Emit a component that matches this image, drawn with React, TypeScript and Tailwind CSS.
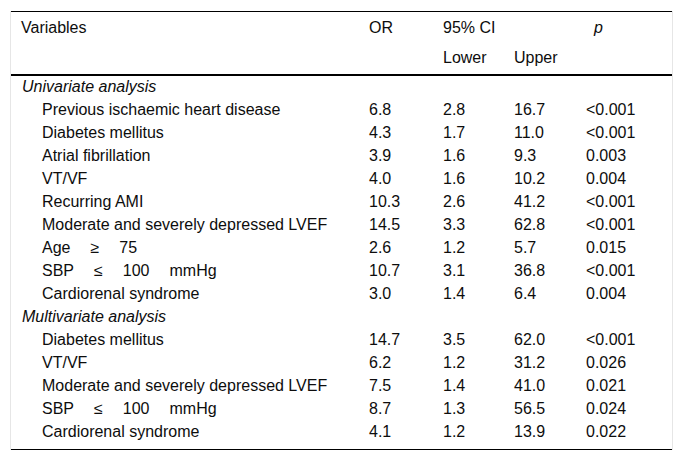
type Row = {
  label: React.ReactNode;
  or?: string;
  lower?: string;
  upper?: string;
  p?: string;
  group?: boolean;
};

function Spaced({ parts }: { parts: string[] }) {
  return (
    <span className="inline-flex gap-[20px]">
      {parts.map((t, i) => (
        <span key={i}>{t}</span>
      ))}
    </span>
  );
}

const rows: Row[] = [
  { label: "Univariate analysis", group: true },
  { label: "Previous ischaemic heart disease", or: "6.8", lower: "2.8", upper: "16.7", p: "<0.001" },
  { label: "Diabetes mellitus", or: "4.3", lower: "1.7", upper: "11.0", p: "<0.001" },
  { label: "Atrial fibrillation", or: "3.9", lower: "1.6", upper: "9.3", p: "0.003" },
  { label: "VT/VF", or: "4.0", lower: "1.6", upper: "10.2", p: "0.004" },
  { label: "Recurring AMI", or: "10.3", lower: "2.6", upper: "41.2", p: "<0.001" },
  { label: "Moderate and severely depressed LVEF", or: "14.5", lower: "3.3", upper: "62.8", p: "<0.001" },
  { label: <Spaced parts={["Age", "≥", "75"]} />, or: "2.6", lower: "1.2", upper: "5.7", p: "0.015" },
  { label: <Spaced parts={["SBP", "≤", "100", "mmHg"]} />, or: "10.7", lower: "3.1", upper: "36.8", p: "<0.001" },
  { label: "Cardiorenal syndrome", or: "3.0", lower: "1.4", upper: "6.4", p: "0.004" },
  { label: "Multivariate analysis", group: true },
  { label: "Diabetes mellitus", or: "14.7", lower: "3.5", upper: "62.0", p: "<0.001" },
  { label: "VT/VF", or: "6.2", lower: "1.2", upper: "31.2", p: "0.026" },
  { label: "Moderate and severely depressed LVEF", or: "7.5", lower: "1.4", upper: "41.0", p: "0.021" },
  { label: <Spaced parts={["SBP", "≤", "100", "mmHg"]} />, or: "8.7", lower: "1.3", upper: "56.5", p: "0.024" },
  { label: "Cardiorenal syndrome", or: "4.1", lower: "1.2", upper: "13.9", p: "0.022" },
];

export default function App() {
  return (
    <div className="min-h-[463px] w-[683px] bg-white pt-[11px] pl-[10px] font-['Liberation_Sans',Arial,sans-serif] text-[16px] leading-[18px] text-[#0d0d0d]">
      <div className="w-[663px] border-x border-[#e6e6e6]">
        <table className="w-full table-fixed border-collapse">
          <colgroup>
            <col className="w-[348px]" />
            <col className="w-[74px]" />
            <col className="w-[71px]" />
            <col className="w-[72px]" />
            <col />
          </colgroup>
          <thead>
            <tr className="border-t border-black">
              <th className="h-[31px] pt-[1px] pl-[10px] text-left font-normal">Variables</th>
              <th className="pt-[1px] pl-[10px] text-left font-normal">OR</th>
              <th colSpan={2} className="pt-[1px] pl-[10px] text-left font-normal">95% CI</th>
              <th className="pt-[1px] pl-[18px] text-left font-normal italic">p</th>
            </tr>
            <tr className="border-b-2 border-black">
              <th className="h-[32px]" />
              <th />
              <th className="pl-[10px] text-left font-normal">Lower</th>
              <th className="pl-[10px] text-left font-normal">Upper</th>
              <th />
            </tr>
          </thead>
          <tbody className="border-b border-black">
            {rows.map((r, i) =>
              r.group ? (
                <tr key={i}>
                  <td colSpan={5} className="h-[23px] pt-[1px] pl-[11px] italic">
                    {r.label}
                  </td>
                </tr>
              ) : (
                <tr key={i}>
                  <td className="h-[23px] pt-[1px] pl-[31px]">{r.label}</td>
                  <td className="pt-[1px] pl-[10px]">{r.or}</td>
                  <td className="pt-[1px] pl-[10px]">{r.lower}</td>
                  <td className="pt-[1px] pl-[10px]">{r.upper}</td>
                  <td className="pt-[1px] pl-[10px]">{r.p}</td>
                </tr>
              )
            )}
            <tr>
              <td colSpan={5} className="h-[7px]" />
            </tr>
          </tbody>
        </table>
      </div>
    </div>
  );
}
